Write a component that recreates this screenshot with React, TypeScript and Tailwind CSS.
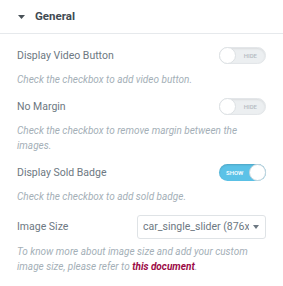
import React from 'react';

type ToggleProps = {
  on: boolean;
  label: string;
};

const Toggle: React.FC<ToggleProps> = ({ on, label }) => {
  if (on) {
    return (
      <div className="relative flex h-[17px] w-[47px] items-center rounded-full bg-[#5bc2e7] shadow-[inset_0_1px_2px_rgba(0,0,0,0.15)]">
        <span className="pl-[7px] text-[6px] font-medium uppercase text-white">{label}</span>
        <span className="absolute right-0 top-0 h-[17px] w-[17px] rounded-full border border-[#c7d5dc] bg-white" />
      </div>
    );
  }
  return (
    <div className="relative flex h-[17px] w-[47px] items-center justify-end rounded-full border border-[#e3e6e9] bg-[#eceff1] shadow-[inset_0_1px_2px_rgba(0,0,0,0.08)]">
      <span className="pr-[8px] text-[6px] font-medium uppercase text-[#b5bcc2]">{label}</span>
      <span className="absolute -left-px -top-px h-[17px] w-[17px] rounded-full border border-[#dde1e4] bg-white" />
    </div>
  );
};

type SwitchRowProps = {
  title: string;
  on: boolean;
  description: React.ReactNode;
};

const SwitchRow: React.FC<SwitchRowProps> = ({ title, on, description }) => (
  <div className="flex flex-col">
    <div className="flex h-[17px] items-center justify-between pr-[17px]">
      <span className="text-[10.5px] text-[#6d7882]">{title}</span>
      <Toggle on={on} label={on ? 'Show' : 'Hide'} />
    </div>
    <p className="mt-[8px] pr-[30px] text-[10px] italic leading-[15px] text-[#a4afb7]">{description}</p>
  </div>
);

export default function App() {
  return (
    <div className="h-[286px] w-[283px] overflow-hidden bg-white" style={{ fontFamily: 'Roboto, "Liberation Sans", sans-serif' }}>
      {/* section header */}
      <div className="flex h-[34px] items-center border-b border-[#e6e9ec] pl-[18px]">
        <svg width="7" height="4" viewBox="0 0 7 4" className="mt-px">
          <path d="M0 0h7L3.5 4z" fill="#495157" />
        </svg>
        <span className="ml-[10px] text-[11.5px] font-bold text-[#414a52]">General</span>
      </div>

      <div className="flex flex-col gap-[11px] pl-[17px] pt-[13px]">
        <SwitchRow title="Display Video Button" on={false} description="Check the checkbox to add video button." />
        <SwitchRow
          title="No Margin"
          on={false}
          description="Check the checkbox to remove margin between the images."
        />
        <SwitchRow title="Display Sold Badge" on description="Check the checkbox to add sold badge." />

        <div className="flex flex-col">
          <div className="flex items-center justify-between pr-[17px]">
            <span className="text-[10.5px] text-[#6d7882]">Image Size</span>
            <div className="flex h-[24px] w-[129px] items-center overflow-hidden rounded-[3px] border border-[#dfe3e6] pl-[5px] pr-[6px]">
              <span className="flex-1 overflow-hidden whitespace-nowrap text-[10.5px] text-[#6d7882]">car_single_slider (876x584)</span>
              <svg width="6" height="4" viewBox="0 0 6 4" className="ml-[4px] shrink-0">
                <path d="M0 0h6L3 4z" fill="#6d7882" />
              </svg>
            </div>
          </div>
          <p className="mt-[5px] pr-[30px] text-[10px] italic leading-[15px] text-[#a4afb7]">
            To know more about image size and add your custom image size, please refer to{' '}
            <span className="font-bold text-[#9b0a46]">this document</span>.
          </p>
        </div>
      </div>
    </div>
  );
}
